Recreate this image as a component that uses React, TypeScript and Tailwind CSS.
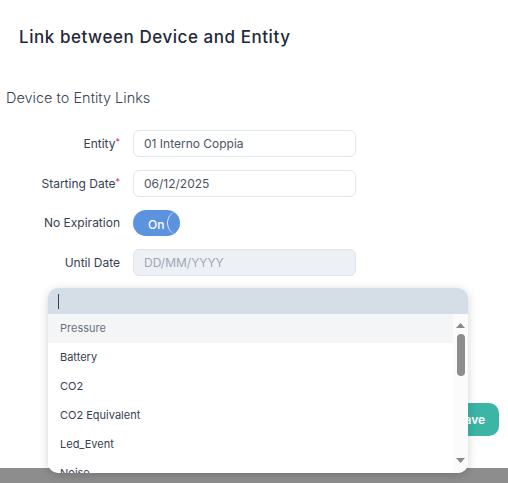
const options = ['Pressure', 'Battery', 'CO2', 'CO2 Equivalent', 'Led_Event', 'Noise']

function Field({ label, required, children }: { label: string; required?: boolean; children: React.ReactNode }) {
  return (
    <div className="flex items-center">
      <div className="w-[121px] pr-[1px] text-right text-[12px] text-[#374151]">
        {label}
        {required && <span className="text-[#e11d48] text-[9px] align-top">*</span>}
      </div>
      <div className="ml-[12px]">{children}</div>
    </div>
  )
}

export default function App() {
  return (
    <div className="relative w-[508px] h-[483px] overflow-hidden bg-white" style={{ fontFamily: 'Inter, "Noto Sans", sans-serif' }}>
      <div className="h-[468px] flex flex-col">
        <h1 className="pl-[19px] pt-[26px] text-[17px] font-medium text-[#1f2937] tracking-[0.55px] leading-[22px]">
          Link between Device and Entity
        </h1>
        <h2 className="pl-[6px] mt-[40px] text-[14.5px] font-light text-[#374151] leading-[20px]">Device to Entity Links</h2>

        <div className="mt-[22px] flex flex-col gap-[13px]">
          <Field label="Entity" required>
            <div className="w-[223px] h-[27px] rounded-[6px] border border-[#e2e8f0] px-[10px] flex items-center text-[12px] text-[#4b5563]">
              01 Interno Coppia
            </div>
          </Field>
          <Field label="Starting Date" required>
            <div className="w-[223px] h-[27px] rounded-[6px] border border-[#e2e8f0] px-[10px] flex items-center text-[12px] text-[#4b5563]">
              06/12/2025
            </div>
          </Field>
          <Field label="No Expiration">
            <div className="relative w-[47px] h-[26px] rounded-full bg-[#5b93df] flex items-center">
              <span className="ml-[15px] mt-[3px] text-[12px] font-medium text-white">On</span>
              <span className="absolute right-0 top-[1px] w-[13px] h-[24px] rounded-l-full border-l-[1.5px] border-white/80" />
            </div>
          </Field>
          <Field label="Until Date">
            <div className="w-[223px] h-[27px] rounded-[6px] border border-[#dfe4ec] bg-[#edf0f5] px-[10px] flex items-center text-[12px] text-[#a0a7b4]">
              DD/MM/YYYY
            </div>
          </Field>
        </div>

        <div className="flex justify-end pr-[9px] mt-[127px]">
          <button className="w-[56px] h-[33px] rounded-[10px] bg-[#3bb5a6] text-white text-[12px] font-semibold">Save</button>
        </div>
      </div>
      <div className="h-[15px] bg-[#8d8d8d]" />

      <div className="absolute left-[48px] top-[288px] w-[420px] rounded-[10px] shadow-[0_2px_10px_rgba(0,0,0,0.18)] overflow-hidden">
        <div className="h-[26px] bg-[#d5dde7] flex items-center pl-[10px]">
          <span className="w-px h-[15px] bg-[#374151]" />
        </div>
        <div className="relative h-[159px] bg-white overflow-hidden">
          {options.map((o, i) => (
            <div
              key={o}
              className={`h-[29px] pl-[12px] pr-[20px] flex items-center text-[11px] ${i === 0 ? 'bg-[#f4f5f7] text-[#6b7280]' : 'text-[#374151]'}`}
            >
              {o}
            </div>
          ))}
          <div className="absolute right-0 top-0 bottom-0 w-[15px] bg-[#fbfbfb] flex flex-col items-center">
            <svg width="9" height="5" viewBox="0 0 9 5" className="mt-[9px]">
              <path d="M0 5 L4.5 0 L9 5 Z" fill="#8a8a8a" />
            </svg>
            <div className="mt-[6px] w-[8px] h-[42px] rounded-full bg-[#8d8d8d]" />
            <div className="flex-1" />
            <svg width="9" height="5" viewBox="0 0 9 5" className="mb-[10px]">
              <path d="M0 0 L4.5 5 L9 0 Z" fill="#8a8a8a" />
            </svg>
          </div>
        </div>
      </div>
    </div>
  )
}
